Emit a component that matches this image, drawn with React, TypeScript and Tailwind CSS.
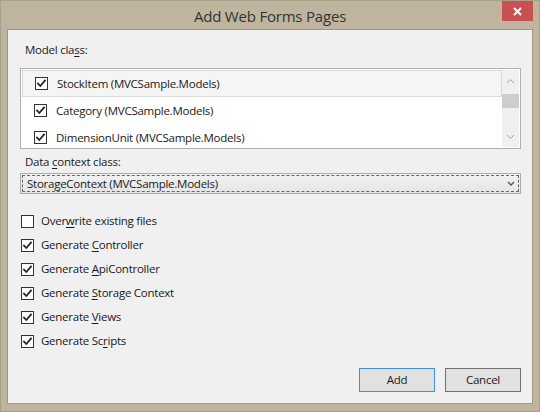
import React from "react";

const Check = () => (
  <svg width="11" height="11" viewBox="0 0 11 11" className="block">
    <path d="M2 5.5 L4.3 8 L9 2.5" fill="none" stroke="#222" strokeWidth="1.8" strokeLinecap="square" />
  </svg>
);

const Box = ({ checked }: { checked: boolean }) => (
  <div className="w-[13px] h-[13px] border border-[#333] bg-white flex items-center justify-center shrink-0">
    {checked && <Check />}
  </div>
);

const U = ({ children }: { children: React.ReactNode }) => <span className="underline underline-offset-2">{children}</span>;

const options: { pre: string; u: string; post: string; checked: boolean }[] = [
  { pre: "Over", u: "w", post: "rite existing files", checked: false },
  { pre: "Generate ", u: "C", post: "ontroller", checked: true },
  { pre: "Generate ", u: "A", post: "piController", checked: true },
  { pre: "Generate ", u: "S", post: "torage Context", checked: true },
  { pre: "Generate ", u: "V", post: "iews", checked: true },
  { pre: "Generate Sc", u: "r", post: "ipts", checked: true },
];

const models = ["StockItem (MVCSample.Models)", "Category (MVCSample.Models)", "DimensionUnit (MVCSample.Models)"];

export default function App() {
  return (
    <div className="w-[540px] h-[412px] bg-[#bfb59f] border border-[#a8a08a] flex flex-col font-['Open_Sans',sans-serif] text-[11.5px] tracking-[-0.25px] text-[#1a1a1a] overflow-hidden">
      <div className="h-[28px] relative flex items-center justify-center shrink-0">
        <span className="text-[15px] text-[#333] tracking-[-0.2px] mt-[2px]">Add Web Forms Pages</span>
        <div className="absolute right-[6px] top-0 w-[31px] h-[20px] bg-[#c75050] flex items-center justify-center">
          <svg width="9" height="9" viewBox="0 0 9 9">
            <path d="M1 1 L8 8 M8 1 L1 8" stroke="white" strokeWidth="2" />
          </svg>
        </div>
      </div>
      <div className="mx-[6px] mb-[7px] flex-1 border border-[#9e9886] bg-[#f0f0f0] pl-[12px] pr-[11px] flex flex-col">
        <div className="pl-[5px] pt-[12px] h-[38px] leading-[16px]">
          Model cla<U>s</U>s:
        </div>
        <div className="h-[81px] border border-[#b0b0b0] bg-white flex p-[1px] overflow-hidden">
          <div className="flex-1 flex flex-col">
            {models.map((m, i) => (
              <div
                key={m}
                className={
                  "h-[27px] shrink-0 flex items-center gap-[9px] pl-[12px] " +
                  (i === 0 ? "bg-[#f5f5f5] border border-[#dadada] pl-[11px]" : "")
                }
              >
                <Box checked />
                <span>{m}</span>
              </div>
            ))}
          </div>
          <div className="w-[17px] bg-[#f0f0f0] flex flex-col items-center">
            <svg width="9" height="6" viewBox="0 0 9 6" className="mt-[8px]">
              <path d="M1 5 L4.5 1.5 L8 5" fill="none" stroke="#a0a0a0" strokeWidth="1" />
            </svg>
            <div className="w-[17px] h-[14px] bg-[#cdcdcd] mt-[10px]" />
            <div className="flex-1" />
            <svg width="9" height="6" viewBox="0 0 9 6" className="mb-[7px]">
              <path d="M1 1 L4.5 4.5 L8 1" fill="none" stroke="#a0a0a0" strokeWidth="1" />
            </svg>
          </div>
        </div>
        <div className="pl-[5px] pt-[5px] h-[24px] leading-[16px]">
          Data <U>c</U>ontext class:
        </div>
        <div className="h-[21px] border border-[#acacac] p-[1px] bg-gradient-to-b from-[#f2f2f2] to-[#e5e5e5]">
          <div className="h-full border border-dashed border-[#666] flex items-center pl-[4px] pr-[3px]">
            <span className="flex-1">StorageContext (MVCSample.Models)</span>
            <svg width="8" height="5" viewBox="0 0 8 5">
              <path d="M1 1 L4 4 L7 1" fill="none" stroke="#555" strokeWidth="1.4" />
            </svg>
          </div>
        </div>
        <div className="mt-[15px] flex flex-col pl-[1px]">
          {options.map((o) => (
            <div key={o.pre + o.u} className="h-[24px] flex items-center gap-[7px]">
              <Box checked={o.checked} />
              <span>
                {o.pre}
                <U>{o.u}</U>
                {o.post}
              </span>
            </div>
          ))}
        </div>
        <div className="flex-1" />
        <div className="flex justify-end gap-[10px] pb-[11px]">
          <button className="w-[76px] h-[24px] border border-[#3c8ee6] bg-[#e1e1e1]">Add</button>
          <button className="w-[76px] h-[24px] border border-[#707070] bg-[#e1e1e1]">Cancel</button>
        </div>
      </div>
    </div>
  );
}
